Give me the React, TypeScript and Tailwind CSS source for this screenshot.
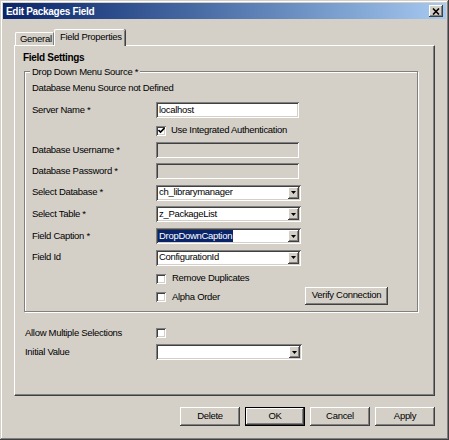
import React from "react";

const raised =
  "shadow-[inset_-1px_-1px_0_#404040,inset_1px_1px_0_#ffffff,inset_-2px_-2px_0_#808080,inset_2px_2px_0_#d4d0c8]";
const sunken =
  "shadow-[inset_1px_1px_0_#808080,inset_-1px_-1px_0_#ffffff,inset_2px_2px_0_#404040,inset_-2px_-2px_0_#d4d0c8]";

function TextBox({ value, disabled }: { value?: string; disabled?: boolean }) {
  return (
    <div
      className={`w-[143px] h-[16px] flex items-center pl-[3px] ${sunken} ${
        disabled ? "bg-[#d4d0c8]" : "bg-white"
      }`}
    >
      {value}
    </div>
  );
}

function ComboBox({ value, selected, width = "w-[145px]" }: { value?: string; selected?: boolean; width?: string }) {
  return (
    <div className={`${width} h-[16px] flex items-center justify-between bg-white pl-[2px] pr-[2px] ${sunken}`}>
      <span className={selected ? "bg-[#0a246a] text-white px-[1px] leading-[12px]" : "pl-[1px]"}>{value}</span>
      <div className={`w-[11px] h-[12px] bg-[#d4d0c8] flex items-center justify-center ${raised}`}>
        <svg width="5" height="3" viewBox="0 0 5 3">
          <path d="M0 0h5L2.5 3z" fill="#000" />
        </svg>
      </div>
    </div>
  );
}

function CheckBox({ checked }: { checked?: boolean }) {
  return (
    <div className={`w-[10px] h-[10px] bg-white flex items-center justify-center shrink-0 ${sunken}`}>
      {checked && (
        <svg width="7" height="7" viewBox="0 0 7 7">
          <path d="M0.5 3l2 2 4-4" stroke="#000" strokeWidth="1.6" fill="none" />
        </svg>
      )}
    </div>
  );
}

function Button({ label, focused, width = "w-[60px]", height = "h-[19px]" }: { label: string; focused?: boolean; width?: string; height?: string }) {
  return (
    <div className={`${width} ${height} ${focused ? "border border-black" : ""} bg-[#d4d0c8]`}>
      <div className={`w-full h-full flex items-center justify-center ${raised}`}>{label}</div>
    </div>
  );
}

function FieldRow({ label, h, children }: { label: string; h: string; children?: React.ReactNode }) {
  return (
    <div className={`flex items-center ${h}`}>
      <div className="w-[124px] shrink-0">{label}</div>
      {children}
    </div>
  );
}

export default function App() {
  return (
    <div
      className={`w-[449px] h-[440px] bg-[#d4d0c8] p-[3px] text-[9.5px] tracking-[-0.3px] text-black font-['Liberation_Sans',Arial,sans-serif] shadow-[inset_-1px_-1px_0_#404040,inset_1px_1px_0_#d4d0c8,inset_-2px_-2px_0_#808080,inset_2px_2px_0_#ffffff]`}
    >
      {/* title bar */}
      <div className="h-[16px] flex items-center justify-between pl-[3px] pr-[3px] bg-gradient-to-r from-[#0a246a] to-[#a6caf0]">
        <span className="text-white font-bold text-[10px]">Edit Packages Field</span>
        <div className={`w-[14px] h-[12px] bg-[#d4d0c8] flex items-center justify-center ${raised}`}>
          <svg width="8" height="7" viewBox="0 0 8 7">
            <path d="M1 0.5l6 6M7 0.5l-6 6" stroke="#000" strokeWidth="1.6" />
          </svg>
        </div>
      </div>

      {/* tabs */}
      <div className="ml-[11px] mt-[9px] flex items-end h-[17px] relative z-10">
        <div className="ml-[1px] w-[39px] h-[13px] flex items-center pl-[4px] whitespace-nowrap overflow-hidden border-t border-l border-white border-r border-r-[#808080] rounded-tl-[2px]">
          General
        </div>
        <div className="w-[71px] h-[17px] -mb-[1px] pb-[1px] flex items-center pl-[5px] whitespace-nowrap bg-[#d4d0c8] border-t border-l border-white rounded-t-[2px] shadow-[inset_-1px_0_0_#808080,1px_0_0_#404040]">
          Field Properties
        </div>
      </div>

      {/* tab panel */}
      <div className="ml-[11px] w-[421px] h-[351px] pt-[6px] pl-[8px] border-t border-l border-white border-r border-b border-r-[#404040] border-b-[#404040] shadow-[inset_-1px_-1px_0_#808080]">
        <div className="h-[12px] leading-[12px] font-bold text-[10px]">Field Settings</div>

        {/* group box */}
        <div className="relative mt-[7px] ml-[1px] w-[394px] h-[241px] border border-[#808080] shadow-[inset_1px_1px_0_#ffffff,1px_1px_0_#ffffff] pt-[10px] pl-[7px]">
          <span className="absolute left-[5px] -top-[6px] px-[2px] bg-[#d4d0c8] leading-[12px]">
            Drop Down Menu Source *
          </span>
          <div className="h-[12px] leading-[12px]">Database Menu Source not Defined</div>
          <div className="mt-[5px]">
            <FieldRow label="Server Name *" h="h-[22px]">
              <TextBox value="localhost" />
            </FieldRow>
            <FieldRow label="" h="h-[19px]">
              <CheckBox checked />
              <span className="ml-[5px]">Use Integrated Authentication</span>
            </FieldRow>
            <FieldRow label="Database Username *" h="h-[20px]">
              <TextBox disabled />
            </FieldRow>
            <FieldRow label="Database Password *" h="h-[22px]">
              <TextBox disabled />
            </FieldRow>
            <FieldRow label="Select Database *" h="h-[21px]">
              <ComboBox value="ch_librarymanager" />
            </FieldRow>
            <FieldRow label="Select Table *" h="h-[22px]">
              <ComboBox value="z_PackageList" />
            </FieldRow>
            <FieldRow label="Field Caption *" h="h-[22px]">
              <ComboBox value="DropDownCaption" selected />
            </FieldRow>
            <FieldRow label="Field Id" h="h-[21px]">
              <ComboBox value="ConfigurationId" />
            </FieldRow>
            <FieldRow label="" h="h-[21px]">
              <CheckBox />
              <span className="ml-[6px]">Remove Duplicates</span>
            </FieldRow>
            <FieldRow label="" h="h-[16px]">
              <CheckBox />
              <span className="ml-[6px] w-[133px]">Alpha Order</span>
              <div className="-mt-[3px]">
                <Button label="Verify Connection" width="w-[83px]" height="h-[18px]" />
              </div>
            </FieldRow>
          </div>
        </div>

        <div className="mt-[11px] ml-[2px]">
          <div className="flex items-center h-[20px]">
            <div className="w-[131px] shrink-0">Allow Multiple Selections</div>
            <CheckBox />
          </div>
          <div className="flex items-center h-[18px]">
            <div className="w-[131px] shrink-0">Initial Value</div>
            <ComboBox width="w-[146px]" />
          </div>
        </div>
      </div>

      {/* buttons */}
      <div className="mt-[11px] flex justify-end gap-[5px] pr-[11px]">
        <Button label="Delete" />
        <Button label="OK" focused />
        <Button label="Cancel" />
        <Button label="Apply" />
      </div>
    </div>
  );
}
